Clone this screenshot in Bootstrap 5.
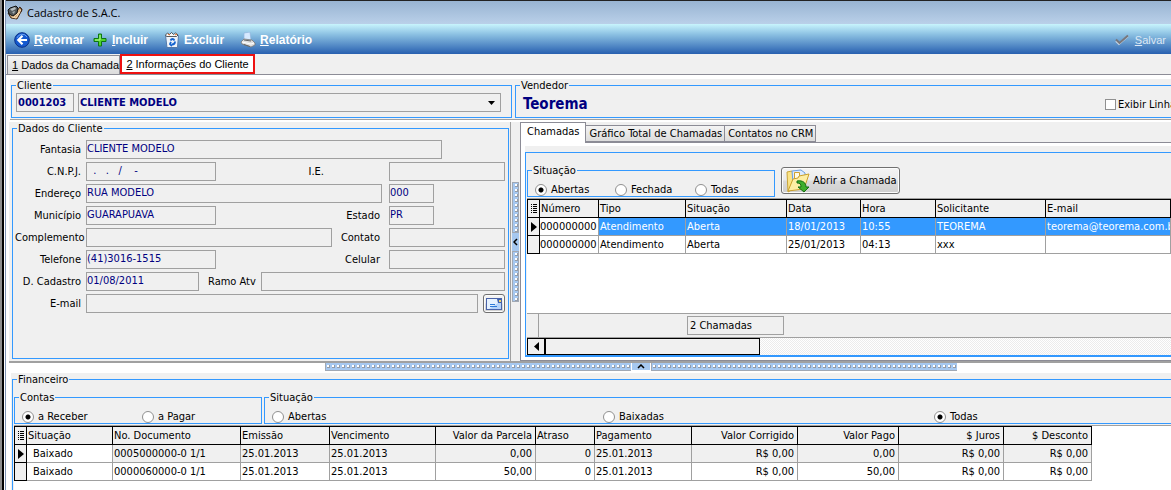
<!DOCTYPE html>
<html lang="pt-BR">
<head>
<meta charset="utf-8">
<meta name="viewport" content="width=device-width, initial-scale=1">
<title>Cadastro de S.A.C.</title>
<link href="https://cdn.jsdelivr.net/npm/bootstrap@5.3.0/dist/css/bootstrap.min.css" rel="stylesheet">
<style>
:root { --face:#f0f0f0; --line:#a0a0a0; --edge:#8c8c96; --blue:#3399ff; --ink:#000080; }
body { font:11px/13px "DejaVu Sans Condensed","DejaVu Sans",sans-serif; color:#000; background:#fff; overflow-x:hidden; }

/* window chrome */
.frame { min-height:100vh; border-left:2px solid #8d8d8d; box-shadow:inset 2px 0 #000; padding-left:3px; }
.window { border-left:1px solid #7f93b4; min-width:0; }
.titlebar { height:24px; border-top:1px solid #222; background:linear-gradient(#98b4d2,#bad0e9); font:11px/22px "Open Sans",sans-serif; padding-left:1px; gap:4px; }
.toolbar { height:30px; background:linear-gradient(#c8f4fd,#8bc0e2 35%,#2860b0); padding:2px 5px 0 8px; }
.tool { border:0; background:none; padding:0; color:#fff; font:bold 12px/16px "Liberation Sans",Arial,sans-serif; display:flex; align-items:center; gap:4px; }
.tool:disabled { font-weight:normal; font-size:11px; color:#dce8f5; gap:6px; }
.strip { font:11px/13px "Liberation Sans",Arial,sans-serif; background:var(--face); border-bottom:1px solid var(--edge); height:21px; padding-left:1px; }
.pagetab { border:1px solid var(--edge); border-bottom:0; background:linear-gradient(#f4f4f4,#dcdcdc); padding:0 0 0 4px; height:19px; }
.pagetab.active { background:#fff; border:2px solid #ee1111; height:20px; width:135px; padding:0; }
.face { background:var(--face); }
.sheetarea { padding-top:4px; min-width:0; }

/* group boxes and fields */
.group { border:1px solid var(--blue); margin:0; padding:0 2px 1px; min-width:0; }
.group > legend { float:none; width:auto; font-size:11px; line-height:13px; margin:0 0 0 2px; padding:0 1px; }
.field { border:1px solid var(--line); background:var(--face); color:var(--ink); height:19px; padding:0 0 2px; font-size:11px; line-height:14px; border-radius:0; min-width:0; outline:0; }
.field:focus { border-color:var(--blue); }
.combo { font-weight:bold; height:19px; padding:0 1px; }
.code { width:58px; }
select.field { appearance:none; width:423px; background:var(--face) url("data:image/svg+xml,%3Csvg xmlns='http://www.w3.org/2000/svg' width='7' height='4'%3E%3Cpath d='M0 0h7L3.5 4z'/%3E%3C/svg%3E") no-repeat right 5px center; }
.identity { border-bottom:1px solid var(--line); padding:0 0 1px 1px; gap:3px; }
.who { gap:4px; padding:1px 0 3px 2px; }
.west { width:501px; flex:none; }
.seller { font-size:15px; line-height:24px; color:var(--ink); padding-left:5px; }
.showline { width:66px; }
.form { gap:3px; min-height:222px; padding-top:5px; }
.line { gap:5px; padding-right:1px; }
.line > label:first-child { width:66px; text-align:right; white-space:nowrap; }
.mid { flex:1; text-align:right; white-space:nowrap; padding-right:4px; }
.ie { padding-right:60px; }
.slot { width:116px; flex:none; display:flex; }
.w-s { width:45px; } .w-m { width:113px; } .w-l { width:130px; }
.w-xl { width:246px; } .w-2x { width:296px; } .w-3x { width:356px; }
.btn-win { border:1px solid #707070; border-radius:3px; background:linear-gradient(#f4f4f4,#ebebeb 48%,#dadada 52%,#cfcfcf); box-shadow:inset 0 0 0 1px #fcfcfc; padding:0; color:#000; font-size:11px; }
.mail { width:22px; height:19px; display:flex; align-items:center; justify-content:center; }
.form-check-win { display:flex; align-items:center; gap:4px; white-space:nowrap; }
.showline.form-check-win { gap:2px; }
.dot, .tick { appearance:none; margin:0; width:12px; height:12px; flex:none; border:1px solid #909090; background:#fff; }
.dot { border-radius:50%; }
.dot:checked { background:radial-gradient(circle,#000 2px,#fff 3px); }
.tick { width:11px; height:11px; }
.options { display:grid; height:18px; align-items:center; padding:6px 0 0 5px; }
.opt3 { grid-template-columns:repeat(3,80px); }
.opt2 { grid-template-columns:repeat(2,120px); }
.optw { grid-template-columns:331px 331px 1fr; }

/* splitters */
.middle { margin:2px 0 0 3px; border-bottom:2px solid var(--line); }
.west-pane { width:502px; flex:none; padding-left:3px; border-right:1px solid var(--line); }
.client { width:497px; margin-bottom:2px; }
.vsplit { width:9px; flex:none; }
.hsplit { height:10px; padding-left:105px; gap:1px; }
.grip-h, .grip-v { border:1px solid #a0a8b4; background:#a6c8f0 url("data:image/svg+xml,%3Csvg xmlns='http://www.w3.org/2000/svg' width='5' height='5'%3E%3Cpath d='M1 1h3v3h-3z' fill='%23949ca8'/%3E%3Cpath d='M1 1h2v2h-2z' fill='%23fff'/%3E%3C/svg%3E"); }
.grip-h { height:8px; width:306px; border-width:0 0 1px 1px; background-repeat:repeat-x; background-position:0 1px; }
.grip-v { width:7px; height:51px; background-repeat:repeat-y; background-position:1px 0; }
.fold { border:0; padding:0; background:#a6c8f0; display:flex; align-items:center; justify-content:center; }
.fold-v { width:7px; height:18px; }
.fold-h { width:18px; height:7px; }

/* calls */
.east { min-width:0; }
.inner-tab { border:1px solid var(--edge); border-left:0; background:linear-gradient(#f4f4f4,#dcdcdc); padding:0 2px 0 3px; height:17px; color:#000; white-space:nowrap; font-size:11px; line-height:15px; }
.inner-tab.active { height:21px; background:#fff; border-left:1px solid var(--edge); border-bottom:0; padding:0 6px 4px; margin-bottom:-1px; position:relative; }
.pane { border:1px solid var(--edge); border-right:0; background:#fff; padding:3px 0 3px 4px; }
.calls-wrap { padding-top:6px; }
.calls { border:1px solid var(--blue); border-width:1px 0 2px 1px; padding-left:1px; }
.callbar { padding:11px 0 1px; gap:6px; }
.filter { width:248px; }
.open { width:119px; height:27px; align-self:center; padding-left:3px; gap:2px; }
.calltable { background:#fff; flex:1; min-height:113px; border-top:1px solid var(--line); }
.calltable td:nth-child(2) { padding:0; }
.callfoot { height:25px; border:1px solid var(--line); border-width:1px 0; }
.stub { width:12px; align-self:stretch; border-right:1px solid var(--line); }
.total { border:1px solid var(--line); width:97px; margin-left:148px; padding:2px; height:19px; }
.track { height:17px; background:repeating-conic-gradient(#ececec 0 25%,#fff 0 50%) 0 0/2px 2px; }
.thumb { border:1px solid #000; background:var(--face); width:215px; }
.back { width:18px; }

/* data tables */
.sheet { table-layout:fixed; border-collapse:collapse; line-height:13px; margin:0; }
.sheet th, .sheet td { height:18px; padding:0 0 0 1px; white-space:nowrap; overflow:hidden; border:1px solid var(--line); }
.sheet th { font-weight:normal; background:var(--face); border:1px solid #000; }
.sheet td:first-child, .sheet th:first-child { background:var(--face); border:1px solid #000; padding:0; text-align:center; }
.sheet svg { display:block; margin:auto; }
.sheet .num { text-align:right; padding-right:3px; }
.sel td:nth-child(n+3) { background:var(--blue); color:#fff; border-top:1px dotted #b86a20; border-bottom:1px dotted #b86a20; }
.sel td:nth-child(2) { border:1px dotted #000; }
.cur td:nth-child(n+3) { background:var(--face); }
.bills td:nth-child(2) { padding-left:6px; }

/* finance */
.finance { margin-left:5px; padding-left:1px; }
.finbar { gap:2px; padding:5px 0 1px 1px; }
.contas { width:248px; flex:none; }
.bills { background:#fff; border-top:1px solid var(--line); margin-left:1px; }
</style>
</head>
<body>
<div class="frame d-flex">
<div class="window d-flex flex-column flex-fill">
  <header class="titlebar d-flex align-items-center">
    <svg width="16" height="16" viewBox="0 0 16 16"><path d="M1 8l3 5 6 1 5-9-2-3-4 5z" fill="#d8ae7c" stroke="#4a2e17"/><path d="M1 5l2-2 6-2 2 2-1 5-4 3-4-2z" fill="#53595c" stroke="#111"/><path d="M3 4l5-2 1 2-4 2z" fill="#b5bdbf"/><path d="M5 7l3-1-1 3z" fill="#a8b0b2"/><path d="M5 12l4 1 5-8M7 12l5-5" stroke="#f7dcb4" fill="none"/><path d="M12 2l3 2-1 3" stroke="#3e2718" fill="none"/></svg>
    <span>Cadastro de S.A.C.</span>
  </header>

  <nav class="toolbar d-flex align-items-center">
    <button class="tool" type="button"><svg width="16" height="16" viewBox="0 0 16 16"><circle cx="8" cy="8" r="7.3" fill="#1459cf" stroke="#0b2f86"/><path d="M3 6a5.500 5.500 0 0 1 10-1" stroke="#6ba5f5" fill="none"/><path d="M8.500 3.800L4.300 8l4.200 4.200M4.800 8H13" stroke="#fff" stroke-width="2.200" fill="none"/></svg><span><u>R</u>etornar</span></button>
    <button class="tool ms-2" type="button"><svg width="16" height="16" viewBox="0 0 16 16"><path d="M6.500 2h3v4.500H14v3H9.500V14h-3V9.500H2v-3h4.500z" fill="#4fd32d" stroke="#0c7610"/><path d="M8 3v5H3" stroke="#b5f793" fill="none"/></svg><span><u>I</u>ncluir</span></button>
    <button class="tool ms-3" type="button"><svg width="16" height="16" viewBox="0 0 16 16"><path d="M1.500 3.500h13l-1 12H3z" fill="#eef4fb" stroke="#5579a8"/><path d="M1.500 3l2-2 2 1.500 2-2 2 2 2-1.500 2.500 2-1.500 1.500h-10z" fill="#f8f8f8" stroke="#333" stroke-width=".8"/><path d="M4 2l2 1M11 3l2-1" stroke="#e46a20"/><path d="M6.500 8.500c1-2 3-2 4 0M11 9.500c0 2-1 3-3 3M8 14l-2-2 1-2" stroke="#1463cf" stroke-width="1.800" fill="none"/></svg><span>Excluir</span></button>
    <button class="tool ms-3" type="button"><svg width="16" height="16" viewBox="0 0 16 16"><path d="M4 8l0-7 6-1 1 8z" fill="#d6e9ff" stroke="#8fb4dd" stroke-width=".7"/><path d="M1 10l3-3 8 1 3 3v2l-4 2-9-3z" fill="#dedede" stroke="#777" stroke-width=".8"/><path d="M2 10l9 2 3-1" stroke="#fff" fill="none"/><path d="M4 12.500l6 2M4 8l7 1" stroke="#666"/></svg><span><u>R</u>elatório</span></button>
    <button class="tool ms-auto" type="button" disabled><svg width="14" height="12" viewBox="0 0 14 12"><path d="M1 7l3 3 9-8" fill="none" stroke="#c9d6e4" stroke-width="2"/><path d="M1 5.500l3.500 3.500 8.500-7.500" fill="none" stroke="#77777c" stroke-width="2"/></svg><span><u>S</u>alvar</span></button>
  </nav>

  <div class="strip d-flex align-items-end" role="tablist">
    <button class="pagetab" type="button" role="tab"><u>1</u> Dados da Chamada</button>
    <button class="pagetab active" type="button" role="tab" aria-selected="true"><u>2</u> Informações do Cliente</button>
  </div>

  <main class="sheetarea d-flex flex-column flex-fill">
    <section class="identity face d-flex ms-1">
      <fieldset class="group west">
        <legend>Cliente</legend>
        <div class="who d-flex">
          <input class="field combo code" aria-label="Código" value="0001203">
          <select class="field combo" aria-label="Cliente"><option>CLIENTE MODELO</option></select>
        </div>
      </fieldset>
      <fieldset class="group flex-fill border-end-0 pe-0">
        <legend>Vendedor</legend>
        <div class="d-flex justify-content-between align-items-center">
          <strong class="seller">Teorema</strong>
          <label class="form-check-win showline"><input class="tick" type="checkbox"> Exibir Linha</label>
        </div>
      </fieldset>
    </section>

    <div class="middle d-flex">
      <section class="face west-pane">
        <fieldset class="group client">
          <legend>Dados do Cliente</legend>
          <div class="form d-flex flex-column">
            <div class="line d-flex align-items-center"><label for="fan">Fantasia</label><input id="fan" class="field w-3x" value="CLIENTE MODELO"></div>
            <div class="line d-flex align-items-center"><label for="cnpj">C.N.P.J.</label><input id="cnpj" class="field w-l" value="  .   .   /    -"><label class="mid ie" for="ie">I.E.</label><span class="slot"><input id="ie" class="field w-100"></span></div>
            <div class="line d-flex align-items-center"><label for="end">Endereço</label><input id="end" class="field w-2x" value="RUA MODELO"><span class="slot ms-auto"><input class="field w-s" aria-label="Número" value="000"></span></div>
            <div class="line d-flex align-items-center"><label for="mun">Município</label><input id="mun" class="field w-l" value="GUARAPUAVA"><label class="mid" for="uf">Estado</label><span class="slot"><input id="uf" class="field w-s" value="PR"></span></div>
            <div class="line d-flex align-items-center"><label for="com">Complemento</label><input id="com" class="field w-xl"><label class="mid" for="con">Contato</label><span class="slot"><input id="con" class="field w-100"></span></div>
            <div class="line d-flex align-items-center"><label for="tel">Telefone</label><input id="tel" class="field w-l" value="(41)3016-1515"><label class="mid" for="cel">Celular</label><span class="slot"><input id="cel" class="field w-100"></span></div>
            <div class="line d-flex align-items-center"><label for="cad">D. Cadastro</label><input id="cad" class="field w-m" value="01/08/2011"><label class="ms-1" for="ramo">Ramo Atv</label><input id="ramo" class="field flex-fill"></div>
            <div class="line d-flex align-items-center"><label for="mail">E-mail</label><input id="mail" class="field flex-fill"><button class="btn-win mail" type="button" aria-label="Enviar e-mail"><svg width="16" height="12" viewBox="0 0 16 12"><rect x=".5" y=".5" width="15" height="11" fill="#e6f2ff" stroke="#4a63a8"/><path d="M3 11L15 3v8z" fill="#b4d3fa"/><path d="M4 6.500h5M4 8.500h7" stroke="#2d7ad8"/><path d="M11 1h4v4h-3z" fill="#3c5fb0"/><path d="M13 2h2v2h-2z" fill="#f1d46b"/></svg></button></div>
          </div>
        </fieldset>
      </section>

      <div class="vsplit face d-flex flex-column align-items-center justify-content-center">
        <span class="grip-v"></span>
        <button class="fold fold-v" type="button" aria-label="Recolher dados"><svg width="5" height="8" viewBox="0 0 5 8"><path d="M4 1L1 4l3 3" fill="none" stroke="#000" stroke-width="1.500"/></svg></button>
        <span class="grip-v"></span>
      </div>

      <section class="east face flex-fill d-flex flex-column">
        <div class="d-flex align-items-end" role="tablist">
          <button class="inner-tab active" type="button" role="tab" aria-selected="true">Chamadas</button>
          <button class="inner-tab" type="button" role="tab">Gráfico Total de Chamadas</button>
          <button class="inner-tab" type="button" role="tab">Contatos no CRM</button>
        </div>
        <div class="pane flex-fill d-flex flex-column">
          <div class="calls-wrap face flex-fill d-flex flex-column">
          <div class="calls flex-fill d-flex flex-column">
            <div class="d-flex callbar">
              <fieldset class="group filter">
                <legend>Situação</legend>
                <div class="options opt3">
                  <label class="form-check-win"><input class="dot" type="radio" name="s1" checked> Abertas</label>
                  <label class="form-check-win"><input class="dot" type="radio" name="s1"> Fechada</label>
                  <label class="form-check-win"><input class="dot" type="radio" name="s1"> Todas</label>
                </div>
              </fieldset>
              <button class="btn-win open d-flex align-items-center" type="button"><svg width="26" height="24" viewBox="0 0 26 24"><path d="M2 3l5-1 1 3v15l-5 3z" fill="#fbe487" stroke="#c9a53a"/><path d="M7 2l9-1 4 3v10H8z" fill="#dcebff" stroke="#6d9fe0"/><path d="M9.500 3.500h5v8h-5z" fill="#fffbe6" stroke="#d0a030"/><path d="M3 22L8 10l5-1 1-2 10-2-3 9-2 6z" fill="#fdeea4" stroke="#cba02a"/><path d="M12 12c6-1 9 2 9 6h3l-5 5-6-5h3c0-3-1-4-4-4z" fill="#3fae2c" stroke="#156d12"/></svg> Abrir a Chamada</button>
            </div>
            <div class="calltable">
              <table class="sheet w-100">
                <colgroup><col style="width:12px"><col style="width:59px"><col style="width:87px"><col style="width:101px"><col style="width:74px"><col style="width:75px"><col style="width:110px"><col></colgroup>
                <thead><tr><th aria-label="Colunas"><svg width="8" height="11" viewBox="0 0 8 11"><path d="M1 1.500h1M3 1.500h4M1 3.500h1M3 3.500h4M1 5.500h1M3 5.500h4M1 7.500h1M3 7.500h4M1 9.500h1M3 9.500h4" stroke="#000"/></svg></th><th>Número</th><th>Tipo</th><th>Situação</th><th>Data</th><th>Hora</th><th>Solicitante</th><th>E-mail</th></tr></thead>
                <tbody>
                  <tr class="sel"><td><svg width="6" height="10" viewBox="0 0 6 10"><path d="M0 0l6 5-6 5z"/></svg></td><td>000000000</td><td>Atendimento</td><td>Aberta</td><td>18/01/2013</td><td>10:55</td><td>TEOREMA</td><td>teorema@teorema.com.br</td></tr>
                  <tr><td></td><td>000000000</td><td>Atendimento</td><td>Aberta</td><td>25/01/2013</td><td>04:13</td><td>xxx</td><td></td></tr>
                </tbody>
              </table>
            </div>
            <div class="callfoot d-flex align-items-center"><span class="stub"></span><span class="total">2 Chamadas</span></div>
            <div class="track d-flex">
              <button class="thumb back d-flex align-items-center justify-content-center p-0" type="button" aria-label="Rolar à esquerda"><svg width="5" height="9" viewBox="0 0 5 9"><path d="M5 0v9L0 4.500z"/></svg></button>
              <span class="thumb"></span>
            </div>
          </div>
          </div>
        </div>
      </section>
    </div>

    <div class="hsplit d-flex justify-content-center">
      <span class="grip-h"></span>
      <button class="fold fold-h" type="button" aria-label="Recolher financeiro"><svg width="8" height="5" viewBox="0 0 8 5"><path d="M1 4l3-3 3 3" fill="none" stroke="#000" stroke-width="1.500"/></svg></button>
      <span class="grip-h"></span>
    </div>

    <section class="finance face flex-fill d-flex flex-column">
      <fieldset class="group flex-fill border-end-0 border-bottom-0 p-0 d-flex flex-column">
        <legend class="ms-1">Financeiro</legend>
        <div class="finbar d-flex">
          <fieldset class="group contas">
            <legend>Contas</legend>
            <div class="options opt2">
              <label class="form-check-win"><input class="dot" type="radio" name="conta" checked> a Receber</label>
              <label class="form-check-win"><input class="dot" type="radio" name="conta"> a Pagar</label>
            </div>
          </fieldset>
          <fieldset class="group flex-fill border-end-0">
            <legend>Situação</legend>
            <div class="options optw">
              <label class="form-check-win"><input class="dot" type="radio" name="s2"> Abertas</label>
              <label class="form-check-win"><input class="dot" type="radio" name="s2"> Baixadas</label>
              <label class="form-check-win"><input class="dot" type="radio" name="s2" checked> Todas</label>
            </div>
          </fieldset>
        </div>
        <div class="bills flex-fill">
          <table class="sheet">
            <colgroup><col style="width:12px"><col style="width:86px"><col style="width:128px"><col style="width:89px"><col style="width:106px"><col style="width:100px"><col style="width:59px"><col style="width:97px"><col style="width:106px"><col style="width:101px"><col style="width:105px"><col style="width:88px"></colgroup>
            <thead><tr><th aria-label="Colunas"><svg width="8" height="11" viewBox="0 0 8 11"><path d="M1 1.500h1M3 1.500h4M1 3.500h1M3 3.500h4M1 5.500h1M3 5.500h4M1 7.500h1M3 7.500h4M1 9.500h1M3 9.500h4" stroke="#000"/></svg></th><th>Situação</th><th>No. Documento</th><th>Emissão</th><th>Vencimento</th><th class="num">Valor da Parcela</th><th>Atraso</th><th>Pagamento</th><th class="num">Valor Corrigido</th><th class="num">Valor Pago</th><th class="num">$ Juros</th><th class="num">$ Desconto</th></tr></thead>
            <tbody>
              <tr class="cur"><td><svg width="6" height="10" viewBox="0 0 6 10"><path d="M0 0l6 5-6 5z"/></svg></td><td>Baixado</td><td>0005000000-0 1/1</td><td>25.01.2013</td><td>25.01.2013</td><td class="num">0,00</td><td class="num">0</td><td>25.01.2013</td><td class="num">R$ 0,00</td><td class="num">0,00</td><td class="num">R$ 0,00</td><td class="num">R$ 0,00</td></tr>
              <tr><td></td><td>Baixado</td><td>0000060000-0 1/1</td><td>25.01.2013</td><td>25.01.2013</td><td class="num">50,00</td><td class="num">0</td><td>25.01.2013</td><td class="num">R$ 0,00</td><td class="num">50,00</td><td class="num">R$ 0,00</td><td class="num">R$ 0,00</td></tr>
            </tbody>
          </table>
        </div>
      </fieldset>
    </section>
  </main>
</div>
</div>
<script src="https://cdn.jsdelivr.net/npm/bootstrap@5.3.0/dist/js/bootstrap.bundle.min.js"></script>
</body>
</html>
